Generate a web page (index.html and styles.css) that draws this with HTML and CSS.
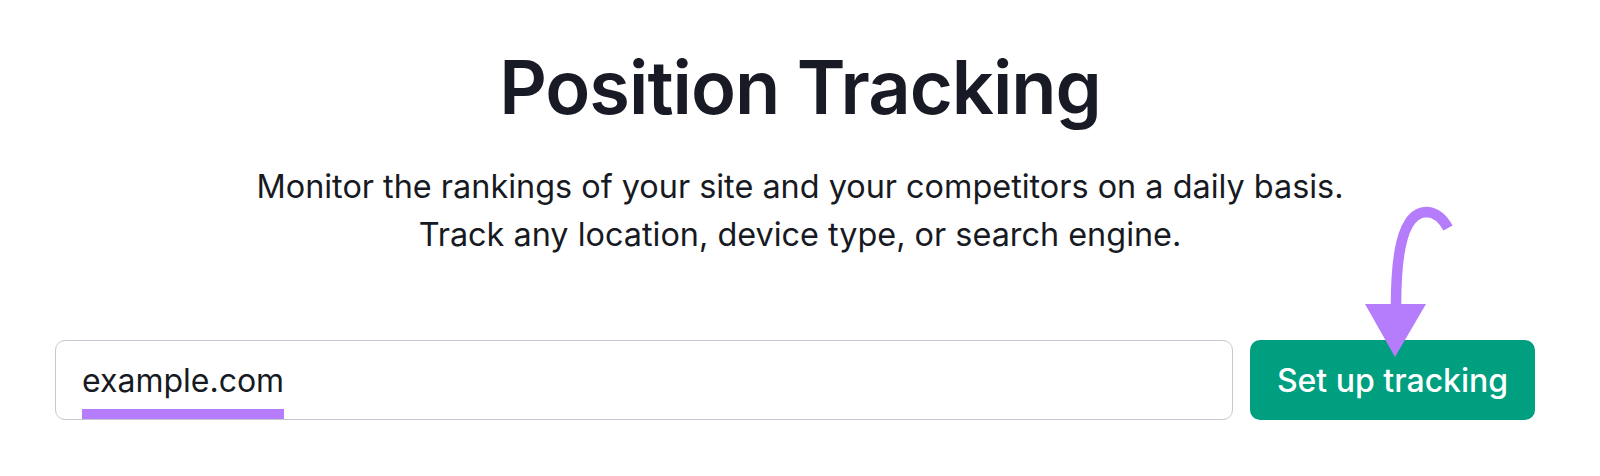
FILE: index.html
```html
<!DOCTYPE html>
<html lang="en">
<head>
    <meta charset="UTF-8">
    <meta name="viewport" content="width=device-width, initial-scale=1.0">
    <title>Position Tracking</title>
    <link rel="stylesheet" href="styles.css">
</head>
<body>

    <div class="page">
        <h1 class="title">Position Tracking</h1>

        <p class="lead">
            Monitor the rankings of your site and your competitors on a daily basis.<br>
            Track any location, device type, or search engine.
        </p>

        <!-- Domain field and start button -->
        <div class="setup">
            <div class="field">
                <span class="field-value">example.com</span>
            </div>
            <button class="start-btn">Set up tracking</button>

            <!-- Annotation arrow pointing at the button -->
            <svg class="arrow" width="100" height="160" viewBox="0 0 100 160">
                <path d="M36 106 C36 60 41 13 66 12 C76 12 83 19 88 28" fill="none" stroke="#b57cfb" stroke-width="10.5"/>
                <polygon points="5,104 66,104 35,157" fill="#b57cfb"/>
            </svg>
        </div>
    </div>

</body>
</html>
```

FILE: styles.css
```css
/* General page */
body {
    margin: 0;
    background: #fff;
    font-family: Inter, 'Noto Sans', sans-serif;
    color: #171a22;
}

.page {
    text-align: center;
    padding-top: 50px;
}

.title {
    margin: 0;
    font-size: 74px;
    line-height: 1;
    font-weight: 600;
    color: #181b25;
    letter-spacing: -1px;
}

.lead {
    margin: 39px 0 0;
    font-size: 32.4px;
    line-height: 48px;
    font-weight: 400;
}

/* Form row */
.setup {
    position: relative;
    display: flex;
    gap: 17px;
    margin: 81px 65px 0 55px;
    text-align: left;
}

.field {
    flex: 1;
    height: 80px;
    box-sizing: border-box;
    border: 1.5px solid #c5c8d0;
    border-radius: 10px;
    padding: 0 26px;
    display: flex;
    flex-direction: column;
    justify-content: flex-end;
    align-items: flex-start;
}

.field-value {
    font-size: 32px;
    line-height: 32px;
    padding-bottom: 12px;
    border-bottom: 10px solid #b57cfb;
}

.start-btn {
    width: 285px;
    height: 80px;
    border: none;
    border-radius: 10px;
    background: #009f7f;
    color: #fff;
    font-family: Inter, 'Noto Sans', sans-serif;
    font-size: 32px;
    font-weight: 500;
    padding: 0;
}

.arrow {
    position: absolute;
    left: 1305px;
    top: -140px;
}
```
